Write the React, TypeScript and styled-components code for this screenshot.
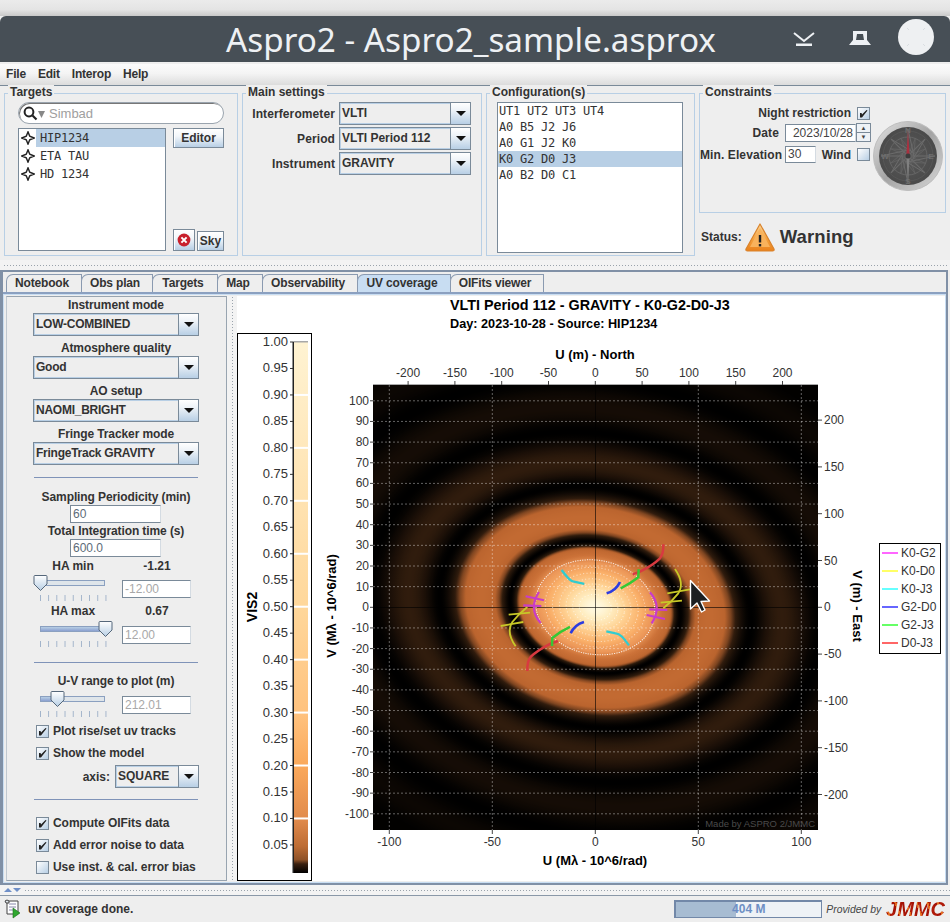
import React from "react";
import styled, { createGlobalStyle } from "styled-components";

const SANS = `"Liberation Sans", Arial, sans-serif`;
const MONO = `"DejaVu Sans Mono", monospace`;
const SLATE = "#7a8a99";
const STEEL = "#b8cfe5";

const Global = createGlobalStyle`
  html, body { margin: 0; padding: 0; width: 950px; height: 922px; overflow: hidden; background: #eeeeee; }
  * { box-sizing: border-box; }
`;

const Win = styled.div`
  width: 950px; height: 922px; display: flex; flex-direction: column;
  background: #eeeeee; color: #333; font: bold 12px ${SANS}; overflow: hidden;
`;
const Desktop = styled.div`height: 16px; background: linear-gradient(#ebebeb, #e4e4e4 60%, #c9c9c9);`;
const TitleBar = styled.div`
  height: 46px; background: #474f56; border-radius: 6px 6px 0 0; display: flex; align-items: center;
  position: relative; color: #eef1f4;
`;
const TitleText = styled.div`
  font: 400 33.25px "Noto Sans", sans-serif; width: 942px; text-align: center; line-height: 46px; white-space: nowrap;
`;
const WinButton = styled.svg`position: absolute; top: 0; left: ${(p: { $x: number }) => p.$x}px;`;
const MenuBar = styled.div`
  height: 22px; margin-top: 2px; padding: 0 6px; background: linear-gradient(#fbfbfb, #f4f4f4 45%, #dcdcdc);
  border-bottom: 1px solid ${SLATE}; display: flex; gap: 12px; align-items: center; padding-bottom: 1px;
`;
const MenuItem = styled.span`font: bold 12px ${SANS}; letter-spacing: -0.2px;`;

const TopArea = styled.div`
  height: 174px; padding: 7px 0 0 4px; display: grid; grid-template-columns: 234px 240px 209px 247px; column-gap: 4px;
`;
const Panel = styled.div<{ $h?: number }>`
  position: relative; border: 1px solid ${STEEL}; height: ${p => p.$h ?? 163}px;
`;
const Legend = styled.span`
  position: absolute; top: -9px; left: 3px; padding: 0 2px; background: #eee; font: bold 12px ${SANS}; line-height: 14px;
`;
const TargetsBody = styled.div`
  padding: 8px 0 0 13px; display: grid; grid-template-columns: 148px 51px; column-gap: 7px; row-gap: 4px;
`;
const SearchBox = styled.div`
  grid-column: 1 / 3; height: 22px; border: 1px solid #9aa4ae; border-radius: 11px; background: #fff; display: flex; align-items: center;
  box-shadow: inset 1px 1px 0 #777; padding-left: 4px; font: 13px ${SANS}; color: #a0a0a0; gap: 2px;
`;
const ListBox = styled.div<{ $w: number; $h: number }>`
  width: ${p => p.$w}px; height: ${p => p.$h}px; background: #fff; border: 1px solid ${SLATE};
`;
const TargetRow = styled.div<{ $sel?: boolean }>`
  height: 18px; display: flex; align-items: center; background: ${p => (p.$sel ? STEEL : "#fff")};
  font: 12px ${MONO}; letter-spacing: -0.22px; color: #333; white-space: pre;
`;
const TargetIcon = styled.span`width: 17px; height: 18px; margin-right: 4px; background: #fff; display: flex; align-items: center; justify-content: center;`;
const SideButtons = styled.div`display: flex; flex-direction: column; justify-content: space-between;`;
const SideBottom = styled.div`display: flex; gap: 2px; align-items: flex-end;`;
const Button = styled.div<{ $w: number; $h: number }>`
  width: ${p => p.$w}px; height: ${p => p.$h}px; border: 1px solid ${SLATE}; display: flex; align-items: center; justify-content: center;
  background: linear-gradient(#fff, #f2f6fa 40%, ${STEEL}); font: bold 12px ${SANS}; box-shadow: inset 1px 1px 0 #fff;
`;
const MainBody = styled.div`
  padding: 8px 0 0 0; display: grid; grid-template-columns: 92px 132px; column-gap: 4px; row-gap: 2px; align-items: center;
`;
const RightLabel = styled.span`text-align: right; font: bold 12px ${SANS}; white-space: nowrap; letter-spacing: 0.1px;`;
const ComboText = styled.span`flex: 1; padding-left: 2px; font: bold 12px ${SANS}; line-height: 20px; white-space: nowrap; overflow: hidden;`;
const ComboBox = styled.div<{ $w?: number }>`
  width: ${p => (p.$w ? p.$w + "px" : "100%")}; height: 23px; border: 1px solid ${SLATE}; background: #eee; display: flex;
  box-shadow: inset 0 0 0 1px ${STEEL};
`;
const ComboArrow = styled.span`
  width: 20px; border-left: 1px solid ${SLATE}; background: linear-gradient(#fff, #eef3f8 35%, ${STEEL}); display: flex; align-items: center; justify-content: center;
  &::after { content: ""; border: 5px solid transparent; border-top: 5px solid #111; border-bottom: 0; border-left-width: 5px; }
`;
const ConfigBody = styled.div`padding: 8px 0 0 10px;`;
const ConfigRow = styled.div<{ $sel?: boolean }>`
  height: 16px; padding-left: 1px; font: 12px/16px ${MONO}; letter-spacing: -0.22px; white-space: pre; color: #333;
  background: ${p => (p.$sel ? STEEL : "transparent")};
`;
const ConstraintCol = styled.div`display: flex; flex-direction: column;`;
const ConstraintBody = styled.div`display: flex; padding: 12px 0 0 0;`;
const ConstraintForm = styled.div`width: 173px; display: flex; flex-direction: column; gap: 4px;`;
const EndRow = styled.div`display: flex; justify-content: flex-end; align-items: center; gap: 6px; padding-right: 3px; height: 14px;`;
const FormRow = styled.div`display: grid; grid-template-columns: 79px 1fr; column-gap: 6px; align-items: center;`;
const FormRight = styled.div`display: flex; align-items: center;`;
const Field = styled.div<{ $w: number; $h?: number; $c?: string; $right?: boolean }>`
  width: ${p => p.$w}px; height: ${p => p.$h ?? 18}px; background: #fff; border: 1px solid ${SLATE}; border-right-color: #d4dbe2; border-bottom-color: ${SLATE};
  font: 12px ${SANS}; line-height: ${p => (p.$h ?? 18) - 2}px; padding: 0 2px; color: ${p => p.$c ?? "#5d6b78"}; text-align: ${p => (p.$right ? "right" : "left")};
`;
const SpinButtons = styled.div`width: 15px; height: 18px; display: flex; flex-direction: column;`;
const SpinPart = styled.span`
  flex: 1; border: 1px solid ${SLATE}; margin-top: -1px; background: #eef2f6; display: flex; align-items: center; justify-content: center;
  font: 6px ${SANS}; color: #444;
`;
const WindSlot = styled.div`flex: 1; display: flex; justify-content: flex-end; align-items: center; gap: 6px; padding-right: 3px;`;
const CompassWrap = styled.svg`margin-top: 15px; flex: none;`;
const StatusRow = styled.div`height: 48px; display: flex; align-items: center; padding-left: 2px; font: bold 12px ${SANS};`;
const StatusIcon = styled.svg`margin: 0 5px 0 3px;`;
const StatusText = styled.span`font: bold 18.5px ${SANS}; color: #333; letter-spacing: 0.1px;`;

const HSplit = styled.div`
  height: 10px; background: #f3f3f3; display: flex; align-items: center; padding: 0 3px;
  &::after { content: ""; flex: 1; height: 3px;
    background-image: radial-gradient(circle, #9aa3ac 0.6px, transparent 0.8px); background-size: 3px 3px; }
`;
const TabFrame = styled.div`
  width: 948px; height: 615px; border: solid #8090a6; border-width: 2px 2px 2px 3px; display: flex; flex-direction: column;
`;
const TabBar = styled.div`height: 22px; padding: 2px 0 0 3px; display: flex; border-bottom: 2px solid #8ba0c0;`;
const Tab = styled.div<{ $w: number; $on?: boolean }>`
  width: ${p => p.$w}px; height: 18px; border: 1px solid #8a9ab0; border-bottom: 0; border-top-left-radius: 7px; margin-right: -1px; padding-right: 4px;
  background: ${p => (p.$on ? "#c8ddf2" : "#eee")}; font: bold 12px/17px ${SANS}; text-align: center; color: #333; letter-spacing: -0.17px;
`;
const TabBody = styled.div`flex: 1; display: flex; padding: 2px 1px 2px 3px; box-shadow: inset 0 0 0 1px #c8ddf2;`;
const Side = styled.div`
  width: 221px; height: 585px; border: 1px solid #98a4b0; border-left-color: #c0c8d0; padding: 1px 0 0 26px; display: flex; flex-direction: column;
`;
const VSplit = styled.div`
  width: 10px; background-color: #f3f3f3;
  background-image: radial-gradient(circle, #9aa3ac 0.6px, transparent 0.8px); background-size: 3px 3px; background-repeat: repeat-y; background-position: center;
`;
const CLabel = styled.div<{ $mt?: number }>`
  width: 166px; height: 14px; margin-top: ${p => p.$mt ?? 0}px; text-align: center; font: bold 12px/14px ${SANS}; white-space: nowrap; letter-spacing: -0.1px; flex: none;
`;
const SideCombo = styled(ComboBox)<{ $mt?: number }>`
  margin-top: ${p => p.$mt ?? 1}px; flex: none;
  ${ComboText} { letter-spacing: -0.25px; }
`;
const Divider = styled.div<{ $mt: number }>`width: 164px; height: 1px; margin: ${p => p.$mt}px 0 0 1px; background: #7f93b8; flex: none;`;
const CenterField = styled(Field)<{ $mt: number }>`margin: ${p => p.$mt}px 0 0 37px; flex: none;`;
const HaRow = styled.div<{ $mt: number }>`display: grid; grid-template-columns: 80px 88px; margin-top: ${p => p.$mt}px; height: 14px; text-align: center; line-height: 14px; flex: none;`;
const SliderRow = styled.div<{ $mt: number }>`display: flex; height: 26px; flex: none; margin-top: ${p => p.$mt}px;`;
const Slider = styled.div`position: relative; width: 89px; height: 26px;`;
const Track = styled.div`
  position: absolute; left: 7px; top: 5px; width: 65px; height: 6px; border: 1px solid #8ba0c0; background: #dfe5ea; overflow: hidden;
`;
const TrackFill = styled.div`height: 100%; background: linear-gradient(${STEEL}, #8ba0d0);`;
const Thumb = styled.svg`position: absolute; top: 0;`;
const Ticks = styled.div`
  position: absolute; left: 7px; top: 20px; width: 67px; height: 6px;
  background-image: linear-gradient(90deg, #9db0c8 1px, transparent 1px); background-size: 8.2px 6px;
`;
const SliderField = styled(Field)`margin-top: 5px; color: #a8a8a8;`;
const CheckRow = styled.div<{ $mt?: number }>`
  height: 18px; margin-top: ${p => p.$mt ?? 4}px; padding-left: 3px; display: flex; align-items: center; gap: 4px; font: bold 12px ${SANS}; white-space: nowrap; flex: none; letter-spacing: -0.05px;
`;
const CheckBox = styled.span`
  width: 13px; height: 13px; flex: none; border: 1px solid ${SLATE}; background: linear-gradient(135deg, #fff, ${STEEL}); display: flex; align-items: center; justify-content: center;
`;
const AxisRow = styled.div`width: 166px; display: flex; justify-content: flex-end; align-items: center; gap: 5px; margin-top: 3px; flex: none;`;

const ChartPanel = styled.div`width: 708px; height: 585px; background: #fff; position: relative; overflow: hidden;`;
const ChartTitle = styled.div`height: 37px; padding: 1px 0 0 213px; color: #000; white-space: nowrap;`;
const ChartMain = styled.div`font: bold 14.35px/16px ${SANS};`;
const ChartSub = styled.div`font: bold 12.7px/15px ${SANS}; margin-top: 4px;`;
const ChartSvg = styled.svg`display: block;`;
const Tick = styled.text`font: 12px ${SANS}; fill: #333;`;
const AxisName = styled.text`font: bold 13px ${SANS}; fill: #000;`;
const ColorName = styled.text`font: bold 14px ${SANS}; fill: #000;`;
const Mark = styled.text`font: 9.5px ${SANS}; fill: #4a4a4a;`;
const CompassMark = styled.text`font: bold 8px ${SANS}; fill: #6e6e6e;`;

const BottomSplit = styled.div`height: 11px; display: flex; align-items: center; padding-left: 4px; gap: 1px; background: #f3f3f3; border-bottom: 1px solid #8a98a8;`;
const SplitArrow = styled.span<{ $down?: boolean; $c: string }>`
  border: 4px solid transparent; border-width: 4px 4.5px; ${p => (p.$down ? `border-top: 4px solid ${p.$c}; border-bottom: 0;` : `border-bottom: 4px solid ${p.$c}; border-top: 0;`)}
`;
const SplitDots = styled.span`
  flex: 1; height: 3px; margin-left: 2px; background-image: radial-gradient(circle, #9aa3ac 0.6px, transparent 0.8px); background-size: 3px 3px;
`;
const StatusBar = styled.div`flex: 1; display: flex; align-items: center; padding-left: 4px; background: #eee;`;
const StatusMsg = styled.span`margin-left: 8px; flex: 1; font: bold 12px ${SANS};`;
const MemBar = styled.div`width: 148px; height: 18px; border: 1px solid #7288a8; border-left-width: 2px; border-top-width: 2px; position: relative; background: #eef2f6; margin-right: 4px; text-align: center; font: bold 12px/14px ${SANS}; color: #6d8fc4;`;
const MemFill = styled.div`position: absolute; left: 0; top: 0; bottom: 0; background: #a7bcd2;`;
const MemText = styled.span`position: relative;`;
const Provided = styled.span`font: italic 10.4px ${SANS}; color: #444; margin-right: 5px;`;
const Jmmc = styled.span`
  font: italic bold 20px ${SANS}; margin-right: 5px;
  background: repeating-linear-gradient(70deg, #a41206 0 4px, #e2691c 4px 6px, #b01a08 6px 10px);
  -webkit-background-clip: text; background-clip: text; color: transparent;
`;

/* ---------- helpers ---------- */
function j1(x: number) {
  let s = 0; const n = 80;
  for (let i = 0; i < n; i++) { const t = ((i + 0.5) / n) * Math.PI; s += Math.cos(t - x * Math.sin(t)); }
  return s / n;
}
const LUT: [number, number, number, number][] = [
  [0, 0, 0, 0], [0.0008, 12, 7, 3], [0.002, 26, 15, 7], [0.0042, 48, 28, 13], [0.007, 125, 68, 32], [0.011, 186, 100, 46],
  [0.0175, 194, 106, 50], [0.05, 204, 114, 56], [0.13, 235, 150, 88], [0.3, 250, 175, 105], [0.64, 255, 212, 150], [0.9, 255, 238, 195], [1, 255, 248, 222],
];
function lutColor(v: number) {
  for (let i = 1; i < LUT.length; i++) {
    if (v <= LUT[i][0]) {
      const a = LUT[i - 1], b = LUT[i], k = (v - a[0]) / (b[0] - a[0]);
      return `rgb(${Math.round(a[1] + (b[1] - a[1]) * k)},${Math.round(a[2] + (b[2] - a[2]) * k)},${Math.round(a[3] + (b[3] - a[3]) * k)})`;
    }
  }
  return "rgb(255,248,222)";
}
const MAP_STOPS = Array.from({ length: 361 }, (_, i) => {
  const x = (i / 360) * 16;
  const v = x < 1e-4 ? 1 : (2 * j1(x)) / x;
  return { o: i / 360, c: lutColor(v * v) };
});

const Chev = () => <ComboArrow />;
const Combo = ({ text, w }: { text: string; w?: number }) => (
  <ComboBox $w={w}><ComboText>{text}</ComboText><Chev /></ComboBox>
);
const Check = ({ on }: { on?: boolean }) => (
  <CheckBox>
    {on && (
      <svg width="11" height="11" viewBox="0 0 11 11"><path d="M2 5 L2 9.5 L4 9.5 L9.5 2.5 L8.5 2 L4 6.5 L3.6 5 Z" fill="#222" /></svg>
    )}
  </CheckBox>
);
const Star = () => (
  <svg width="14" height="14" viewBox="0 0 16 16"><path d="M8 1 L10 6 L15 8 L10 10 L8 15 L6 10 L1 8 L6 6 Z" fill="#fff" stroke="#222" strokeWidth="1.6" /></svg>
);
const ThumbIcon = ({ x }: { x: number }) => (
  <Thumb style={{ left: x }} width="15" height="16" viewBox="0 0 15 16">
    <path d="M1 1.5 Q1 .5 2 .5 H13 Q14 .5 14 1.5 V9 L7.5 15.5 L1 9 Z" fill="url(#thumbG)" stroke="#55677a" />
  </Thumb>
);

const spokes = Array.from({ length: 16 }, (_, i) => {
  const t = (i * Math.PI) / 8;
  const r = i % 4 === 0 ? 27 : i % 2 === 0 ? 24 : 19;
  return { x: 35 + r * Math.sin(t), y: 35 - r * Math.cos(t), main: i % 2 === 0, x2: 35 + 6 * Math.cos(t), y2: 35 + 6 * Math.sin(t) };
});
const Compass = () => (
  <CompassWrap width="70" height="70" viewBox="0 0 70 70">
    <defs>
      <linearGradient id="ring" x1="0" y1="0" x2="1" y2="1"><stop offset="0" stopColor="#e4e4e4" /><stop offset=".5" stopColor="#a4a4a4" /><stop offset="1" stopColor="#d8d8d8" /></linearGradient>
      <radialGradient id="face"><stop offset="0" stopColor="#5a5a5a" /><stop offset="1" stopColor="#4a4a4a" /></radialGradient>
    </defs>
    <circle cx="35" cy="35" r="34.5" fill="url(#ring)" stroke="#bdbdbd" />
    <circle cx="35" cy="35" r="29" fill="url(#face)" />
    <circle cx="35" cy="35" r="19" fill="none" stroke="#666" strokeWidth="1" />
    <circle cx="35" cy="35" r="25" fill="none" stroke="#5c5c5c" strokeWidth="0.6" />
    {spokes.map((s, i) => (
      <g key={i}>
        <line x1={s.x} y1={s.y} x2={s.x2} y2={s.y2} stroke="#6c6c6c" strokeWidth={s.main ? 1 : 0.6} />
        <line x1="35" y1="35" x2={s.x} y2={s.y} stroke="#6a6a6a" strokeWidth={s.main ? 1.1 : 0.6} />
      </g>
    ))}
    <CompassMark x="35" y="12" textAnchor="middle">N</CompassMark>
    <CompassMark x="35" y="63" textAnchor="middle">S</CompassMark>
    <CompassMark x="12" y="38" textAnchor="middle">W</CompassMark>
    <CompassMark x="58" y="38" textAnchor="middle">E</CompassMark>
    <path d="M35 9 L36.6 34 L33.4 34 Z" fill="#a8303f" />
    <path d="M35 60 L36.6 36 L33.4 36 Z" fill="#808080" />
    <circle cx="35" cy="35" r="2.5" fill="#3c3c3c" />
  </CompassWrap>
);

const legendItems: [string, string][] = [
  ["K0-G2", "#ff66ff"], ["K0-D0", "#ffff66"], ["K0-J3", "#66ffff"], ["G2-D0", "#6666ff"], ["G2-J3", "#66ff66"], ["D0-J3", "#ff6666"],
];
const cbarStops: [number, string][] = [
  [0, "#fff3d2"], [0.5, "#ffd79a"], [0.7, "#ffc27e"], [0.8, "#faa85a"], [0.9, "#e08a4c"], [0.95, "#bd6c34"], [0.975, "#8e5228"], [0.983, "#3a2010"], [1, "#000"],
];
const tracks: [string, string, number][] = [
  ["M880 493 Q881 522 870 535 Q850 555 810 575 L788 583", "#d83a40", 7.5],
  ["M752 625 Q780 612 805 592 L806 568", "#35c835", 7.5],
  ["M710 640 Q738 632 750 606", "#2d3ce0", 8],
  ["M575 570 Q600 605 612 605 L643 612", "#30ccd0", 7],
  ["M915 567 Q945 610 925 640 Q905 665 880 685", "#c8c828", 5.5],
  ["M892 640 L960 628 M872 668 L936 662", "#c8c828", 5.5],
  ["M840 637 Q878 680 845 730", "#c83cc8", 6.5],
  ["M838 688 L892 690 M830 705 L885 717", "#c83cc8", 6.5],
];
const U = (v: number) => 595.3 + v * 2.06;
const V = (v: number) => 607.3 - v * 2.065;
const M2X = (v: number) => 595.3 + v * 0.936;
const M2Y = (v: number) => 607.3 - v * 0.936;

const Chart = () => (
  <ChartSvg width="708" height="548" viewBox="237 333 708 548">
    <defs>
      <radialGradient id="mapG" gradientUnits="userSpaceOnUse" cx="0" cy="0" r="1" gradientTransform="translate(595.3 607.3) rotate(11) scale(358 272)">
        {MAP_STOPS.map((s, i) => <stop key={i} offset={s.o} stopColor={s.c} />)}
      </radialGradient>
      <linearGradient id="cbarG" x1="0" y1="0" x2="0" y2="1">
        {cbarStops.map(([o, c], i) => <stop key={i} offset={o} stopColor={c} />)}
      </linearGradient>
    </defs>
    {/* colour bar */}
    <rect x="237.5" y="333.5" width="74" height="547" fill="#fff" stroke="#000" />
    <rect x="293" y="342" width="15" height="531" fill="url(#cbarG)" />
    <rect x="293" y="341" width="15" height="1.5" fill="#a8a8a8" />
    <rect x="292.5" y="342" width="1.5" height="531" fill="#222" />
    {[0.9, 0.8, 0.7, 0.6, 0.5, 0.4, 0.3, 0.2, 0.1].map(v => (
      <rect key={v} x="294" y={342 + ((1 - v) / 0.05) * 26.47 - 1} width="14" height="2" fill="#fff" />
    ))}
    {Array.from({ length: 20 }, (_, i) => {
      const y = 342 + i * 26.47;
      return (
        <g key={i}>
          <line x1="290" x2="293" y1={y} y2={y} stroke="#333" />
          <Tick x="288" y={y + 4} textAnchor="end" style={{ fontSize: 13 }}>{(1 - i * 0.05).toFixed(2)}</Tick>
        </g>
      );
    })}
    <ColorName transform="translate(257 607) rotate(-90)" textAnchor="middle">VIS2</ColorName>

    {/* map */}
    <rect x="373" y="385" width="445" height="445" fill="url(#mapG)" />
    {Array.from({ length: 21 }, (_, i) => 100 - i * 10).filter(v => v !== 0).map(v => (
      <line key={v} x1="373" x2="818" y1={V(v)} y2={V(v)} stroke="#fff" strokeOpacity=".38" strokeDasharray="2 2" />
    ))}
    {[-100, -50, 50, 100].map(v => (
      <line key={v} x1={U(v)} x2={U(v)} y1="385" y2="830" stroke="#fff" strokeOpacity=".38" strokeDasharray="2 2" />
    ))}
    <line x1="373" x2="818" y1="607.5" y2="607.5" stroke="#000" strokeOpacity=".6" />
    <line x1="595.5" x2="595.5" y1="385" y2="830" stroke="#000" strokeOpacity=".6" />
    <g transform="translate(595.3 607.3) rotate(11)" fill="none" stroke="#fff">
      <ellipse rx="60" ry="47" strokeOpacity=".9" strokeDasharray="1.2 1.2" />
      {[0.84, 0.72, 0.6, 0.49, 0.38, 0.27].map(k => (
        <ellipse key={k} rx={60 * k} ry={47 * k} strokeOpacity=".6" strokeDasharray="1 2.4" />
      ))}
    </g>
    <g transform="translate(370 380) scale(.3333)" fill="none" strokeLinecap="butt">
      {tracks.map(([d, c, w], i) => (
        <g key={i} stroke={c} strokeWidth={w}>
          <path d={d} />
          <path d={d} transform="translate(1352 1366) scale(-1 -1)" />
        </g>
      ))}
    </g>
    <path d="M690.5 580.5 V609 L697 603 L701.5 612 L705 610 L701 601.5 L709.5 601 Z" fill="#1c1f22" stroke="#fff" strokeWidth="1.4" strokeLinejoin="round" />
    <Mark x="815" y="827" textAnchor="end">Made by ASPRO 2/JMMC</Mark>

    {/* axes */}
    <line x1="373" x2="818" y1="384.5" y2="384.5" stroke="#aaa" />
    {[-200, -150, -100, -50, 0, 50, 100, 150, 200].map(v => (
      <g key={v}>
        <line x1={M2X(v)} x2={M2X(v)} y1="381" y2="385" stroke="#444" />
        <Tick x={M2X(v)} y="377" textAnchor="middle">{v}</Tick>
        <line x1="818" x2="822" y1={M2Y(v)} y2={M2Y(v)} stroke="#444" />
        <Tick x="824" y={M2Y(v) + 4}>{v}</Tick>
      </g>
    ))}
    {Array.from({ length: 21 }, (_, i) => 100 - i * 10).map(v => (
      <g key={v}>
        <line x1="370" x2="373" y1={V(v)} y2={V(v)} stroke="#444" />
        <Tick x="369" y={V(v) + 4} textAnchor="end">{v}</Tick>
      </g>
    ))}
    {[-100, -50, 0, 50, 100].map(v => (
      <g key={v}>
        <line x1={U(v)} x2={U(v)} y1="830" y2="834" stroke="#444" />
        <Tick x={U(v)} y="846" textAnchor="middle">{v}</Tick>
      </g>
    ))}
    <AxisName x="595" y="359" textAnchor="middle">U (m) - North</AxisName>
    <AxisName x="595" y="865" textAnchor="middle">U (Mλ - 10^6/rad)</AxisName>
    <AxisName transform="translate(336 606) rotate(-90)" textAnchor="middle">V (Mλ - 10^6/rad)</AxisName>
    <AxisName transform="translate(853 606) rotate(90)" textAnchor="middle">V (m) - East</AxisName>

    {/* legend */}
    <rect x="879.5" y="543.5" width="61" height="110" fill="#fff" stroke="#000" />
    {legendItems.map(([t, c], i) => (
      <g key={t}>
        <line x1="882" x2="898" y1={553 + i * 18} y2={553 + i * 18} stroke={c} strokeWidth="2" />
        <Tick x="901" y={557 + i * 18}>{t}</Tick>
      </g>
    ))}
  </ChartSvg>
);

const tabs: [string, number][] = [["Notebook", 76], ["Obs plan", 72], ["Targets", 66], ["Map", 46], ["Observability", 96], ["UV coverage", 94], ["OIFits viewer", 94]];

export default function App() {
  return (
    <Win>
      <Global />
      <svg width="0" height="0" style={{ position: "absolute" }}>
        <defs>
          <linearGradient id="thumbG" x1="0" y1="0" x2="0" y2="1"><stop offset="0" stopColor="#fff" /><stop offset="1" stopColor="#b8cfe5" /></linearGradient>
          <linearGradient id="warnG" x1="0" y1="0" x2="0" y2="1"><stop offset="0" stopColor="#fbd79a" /><stop offset=".55" stopColor="#f4a23e" /><stop offset="1" stopColor="#e9811c" /></linearGradient>
        </defs>
      </svg>
      <Desktop />
      <TitleBar>
        <TitleText>Aspro2 - Aspro2_sample.asprox</TitleText>
        <WinButton $x={790} width="28" height="46" viewBox="0 0 28 46">
          <path d="M4 17 L14 25 L24 17" fill="none" stroke="#eef1f4" strokeWidth="2" />
          <rect x="6" y="27.5" width="16" height="2.5" fill="#eef1f4" />
        </WinButton>
        <WinButton $x={846} width="28" height="46" viewBox="0 0 28 46">
          <path d="M3 29 L7 24 V15 H21 V24 L25 29 Z M11 18 L10 24 H18 L17 18 Z" fill="#eef1f4" fillRule="evenodd" />
        </WinButton>
        <WinButton $x={896} width="40" height="46" viewBox="0 0 40 46">
          <circle cx="20" cy="21" r="18" fill="#eef0f2" />
          <path d="M11.5 12.5 l1 1 M28.5 12.5 l-1 1 M11.5 29.5 l1 -1 M28.5 29.5 l-1 -1" stroke="#c5cad0" strokeWidth="1" />
        </WinButton>
      </TitleBar>
      <MenuBar>
        <MenuItem>File</MenuItem><MenuItem>Edit</MenuItem><MenuItem>Interop</MenuItem><MenuItem>Help</MenuItem>
      </MenuBar>
      <TopArea>
        <Panel>
          <Legend>Targets</Legend>
          <TargetsBody>
            <SearchBox>
              <svg width="24" height="15" viewBox="0 0 24 15">
                <circle cx="6" cy="6" r="4.4" fill="none" stroke="#222" strokeWidth="2" />
                <path d="M9.5 9.5 L13.5 13.5" stroke="#222" strokeWidth="2.2" />
                <path d="M15 5 H22 L18.5 12 Z" fill="#888" />
              </svg>
              Simbad
            </SearchBox>
            <ListBox $w={148} $h={123}>
              <TargetRow $sel><TargetIcon><Star /></TargetIcon>HIP1234</TargetRow>
              <TargetRow><TargetIcon><Star /></TargetIcon>ETA TAU</TargetRow>
              <TargetRow><TargetIcon><Star /></TargetIcon>HD 1234</TargetRow>
            </ListBox>
            <SideButtons>
              <Button $w={51} $h={20}>Editor</Button>
              <SideBottom>
                <Button $w={22} $h={22}>
                  <svg width="14" height="14" viewBox="0 0 14 14">
                    <circle cx="7" cy="7" r="6.4" fill="#c8202c" />
                    <path d="M4.4 4.4 L9.6 9.6 M9.6 4.4 L4.4 9.6" stroke="#fff" strokeWidth="2" />
                  </svg>
                </Button>
                <Button $w={27} $h={20}>Sky</Button>
              </SideBottom>
            </SideButtons>
          </TargetsBody>
        </Panel>
        <Panel>
          <Legend>Main settings</Legend>
          <MainBody>
            <RightLabel>Interferometer</RightLabel><Combo text="VLTI" />
            <RightLabel>Period</RightLabel><Combo text="VLTI Period 112" />
            <RightLabel>Instrument</RightLabel><Combo text="GRAVITY" />
          </MainBody>
        </Panel>
        <Panel>
          <Legend>Configuration(s)</Legend>
          <ConfigBody>
            <ListBox $w={186} $h={151}>
              <ConfigRow>UT1 UT2 UT3 UT4</ConfigRow>
              <ConfigRow>A0 B5 J2 J6</ConfigRow>
              <ConfigRow>A0 G1 J2 K0</ConfigRow>
              <ConfigRow $sel>K0 G2 D0 J3</ConfigRow>
              <ConfigRow>A0 B2 D0 C1</ConfigRow>
            </ListBox>
          </ConfigBody>
        </Panel>
        <ConstraintCol>
          <Panel $h={120}>
            <Legend>Constraints</Legend>
            <ConstraintBody>
              <ConstraintForm>
                <EndRow><span>Night restriction</span><Check on /></EndRow>
                <FormRow>
                  <RightLabel>Date</RightLabel>
                  <FormRight>
                    <Field $w={71} $right $c="#444">2023/10/28</Field>
                    <SpinButtons><SpinPart>▲</SpinPart><SpinPart>▼</SpinPart></SpinButtons>
                  </FormRight>
                </FormRow>
                <FormRow>
                  <RightLabel>Min. Elevation</RightLabel>
                  <FormRight>
                    <Field $w={31} $h={17} $c="#444">30</Field>
                    <WindSlot><span>Wind</span><Check /></WindSlot>
                  </FormRight>
                </FormRow>
              </ConstraintForm>
              <Compass />
            </ConstraintBody>
          </Panel>
          <StatusRow>
            <span>Status:</span>
            <StatusIcon width="30" height="30" viewBox="0 0 30 30">
              <path d="M15 2 L29 27 Q29.5 29 27.5 29 H2.5 Q.5 29 1 27 Z" fill="url(#warnG)" stroke="#d9822b" strokeWidth="1.2" strokeLinejoin="round" />
              <path d="M15 6 L25 25 H5 Z" fill="#f8b25c" />
              <rect x="13.8" y="13" width="2.4" height="7.5" fill="#222" />
              <rect x="13.8" y="22" width="2.4" height="2.4" fill="#222" />
            </StatusIcon>
            <StatusText>Warning</StatusText>
          </StatusRow>
        </ConstraintCol>
      </TopArea>
      <HSplit />
      <TabFrame>
        <TabBar>
          {tabs.map(([t, w]) => <Tab key={t} $w={w} $on={t === "UV coverage"}>{t}</Tab>)}
        </TabBar>
        <TabBody>
          <Side>
            <CLabel>Instrument mode</CLabel>
            <SideCombo $w={166}><ComboText>LOW-COMBINED</ComboText><Chev /></SideCombo>
            <CLabel $mt={5}>Atmosphere quality</CLabel>
            <SideCombo $w={166}><ComboText>Good</ComboText><Chev /></SideCombo>
            <CLabel $mt={5}>AO setup</CLabel>
            <SideCombo $w={166}><ComboText>NAOMI_BRIGHT</ComboText><Chev /></SideCombo>
            <CLabel $mt={5}>Fringe Tracker mode</CLabel>
            <SideCombo $w={166}><ComboText>FringeTrack GRAVITY</ComboText><Chev /></SideCombo>
            <Divider $mt={12} />
            <CLabel $mt={12}>Sampling Periodicity (min)</CLabel>
            <CenterField $mt={1} $w={91} $h={18}>60</CenterField>
            <CLabel $mt={1}>Total Integration time (s)</CLabel>
            <CenterField $mt={1} $w={91} $h={18}>600.0</CenterField>
            <HaRow $mt={2}><span>HA min</span><span>-1.21</span></HaRow>
            <SliderRow $mt={2}>
              <Slider>
                <Track><TrackFill style={{ width: "0%" }} /></Track>
                <Ticks />
                <ThumbIcon x={0} />
              </Slider>
              <SliderField $w={69}>-12.00</SliderField>
            </SliderRow>
            <HaRow $mt={3}><span>HA max</span><span>0.67</span></HaRow>
            <SliderRow $mt={3}>
              <Slider>
                <Track><TrackFill style={{ width: "100%" }} /></Track>
                <Ticks />
                <ThumbIcon x={65} />
              </Slider>
              <SliderField $w={69}>12.00</SliderField>
            </SliderRow>
            <Divider $mt={15} />
            <CLabel $mt={11}>U-V range to plot (m)</CLabel>
            <SliderRow $mt={3}>
              <Slider>
                <Track><TrackFill style={{ width: "26%" }} /></Track>
                <Ticks />
                <ThumbIcon x={17} />
              </Slider>
              <SliderField $w={69}>212.01</SliderField>
            </SliderRow>
            <CheckRow $mt={5}><Check on />Plot rise/set uv tracks</CheckRow>
            <CheckRow><Check on />Show the model</CheckRow>
            <AxisRow><span>axis:</span><Combo text="SQUARE" w={84} /></AxisRow>
            <Divider $mt={11} />
            <CheckRow $mt={14}><Check on />Compute OIFits data</CheckRow>
            <CheckRow><Check on />Add error noise to data</CheckRow>
            <CheckRow><Check />Use inst. &amp; cal. error bias</CheckRow>
          </Side>
          <VSplit />
          <ChartPanel>
            <ChartTitle>
              <ChartMain>VLTI Period 112 - GRAVITY - K0-G2-D0-J3</ChartMain>
              <ChartSub>Day: 2023-10-28 - Source: HIP1234</ChartSub>
            </ChartTitle>
            <Chart />
          </ChartPanel>
        </TabBody>
      </TabFrame>
      <BottomSplit>
        <SplitArrow $c="#6f8fc8" /><SplitArrow $down $c="#6f8fc8" /><SplitDots />
      </BottomSplit>
      <StatusBar>
        <svg width="16" height="20" viewBox="0 0 16 20">
          <path d="M3 2 H14 V15 H3 Z" fill="#fff" stroke="#444" />
          <path d="M1 2 Q3 0 5 2 V4 H2 Z" fill="#dfe6ec" stroke="#444" />
          <path d="M5 5 H12 M5 8 H12 M5 11 H9" stroke="#88a" />
          <path d="M9 9 L16 14 L9 19 Z" fill="#2fa82f" stroke="#1b6c1b" strokeWidth=".6" />
        </svg>
        <StatusMsg>uv coverage done.</StatusMsg>
        <MemBar><MemFill style={{ width: 60 }} /><MemText>404 M</MemText></MemBar>
        <Provided>Provided by</Provided>
        <Jmmc>JMMC</Jmmc>
      </StatusBar>
    </Win>
  );
}
